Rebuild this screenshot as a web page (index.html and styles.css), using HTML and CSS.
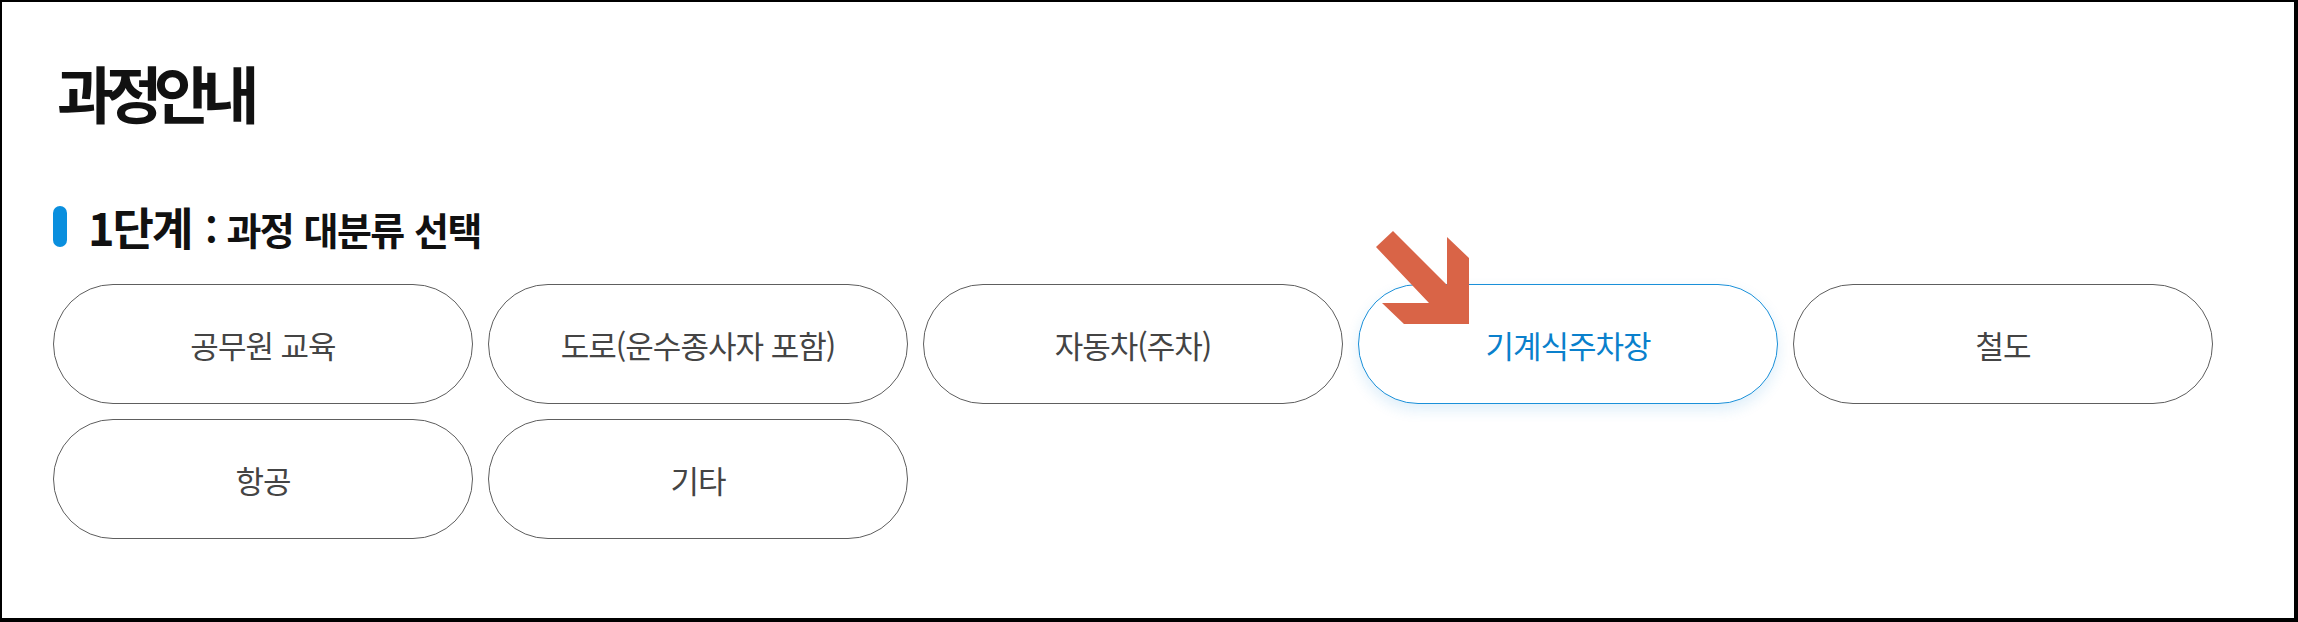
FILE: index.html
```html
<!DOCTYPE html>
<html lang="ko">
<head>
<meta charset="utf-8">
<title>과정안내</title>
<link rel="stylesheet" href="styles.css">
</head>
<body>
<div class="page">
  <h1 class="title">과정안내</h1>
  <h2 class="step"><span class="step-bar"></span><span class="step-num">1단계</span><span class="step-text">: 과정 대분류 선택</span></h2>
  <ul class="cats">
    <li class="cat">공무원 교육</li>
    <li class="cat">도로(운수종사자 포함)</li>
    <li class="cat">자동차(주차)</li>
    <li class="cat cat-active">기계식주차장
      <svg class="pointer" width="102" height="100" viewBox="0 0 102 100" aria-hidden="true">
        <polygon points="22,4 76,58 76,10 98,31 98,97 33,97 11,76 58,76 5,20" fill="#d96447"/>
      </svg>
    </li>
    <li class="cat">철도</li>
    <li class="cat">항공</li>
    <li class="cat">기타</li>
  </ul>
</div>
</body>
</html>
```
FILE: styles.css
```css
html, body {
  margin: 0;
  padding: 0;
  background: #fff;
}
body {
  font-family: "Noto Sans CJK KR", "Noto Sans", sans-serif;
  color: #111;
}
.page {
  box-sizing: border-box;
  width: 2298px;
  height: 622px;
  border: 2px solid #000;
  border-right-width: 4px;
  border-bottom-width: 4px;
  padding: 50px 0 0 51px;
}
.title {
  margin: 0;
  font-size: 62px;
  font-weight: 700;
  line-height: 80px;
  letter-spacing: -8.5px;
  color: #111;
  padding-left: 4px;
}
.step {
  margin: 73px 0 0 0;
  display: flex;
  align-items: center;
  height: 42px;
  font-weight: 700;
  color: #111;
}
.step-bar {
  width: 14px;
  height: 41px;
  border-radius: 7px;
  background: #0a8fde;
  margin-right: 21px;
}
.step-num {
  font-size: 45px;
  letter-spacing: -2px;
  margin-right: 14px;
}
.step-text {
  font-size: 38px;
  letter-spacing: -1.5px;
  padding-top: 4px;
  word-spacing: 1px;
}
.cats {
  list-style: none;
  margin: 37px 0 0 0;
  padding: 0;
  display: flex;
  flex-wrap: wrap;
  gap: 15px;
  width: 2200px;
}
.cat {
  position: relative;
  box-sizing: border-box;
  width: 420px;
  height: 120px;
  border: 1px solid #5e5e5e;
  border-radius: 60px;
  display: flex;
  align-items: center;
  justify-content: center;
  font-size: 31px;
  color: #444;
  letter-spacing: -1px;
  background: #fff;
}
.cat-active {
  border-color: #1a90d9;
  color: #0a80cc;
  box-shadow: 0 6px 14px rgba(26, 144, 217, 0.14);
}
.pointer {
  position: absolute;
  left: 12px;
  top: -58px;
}
```
